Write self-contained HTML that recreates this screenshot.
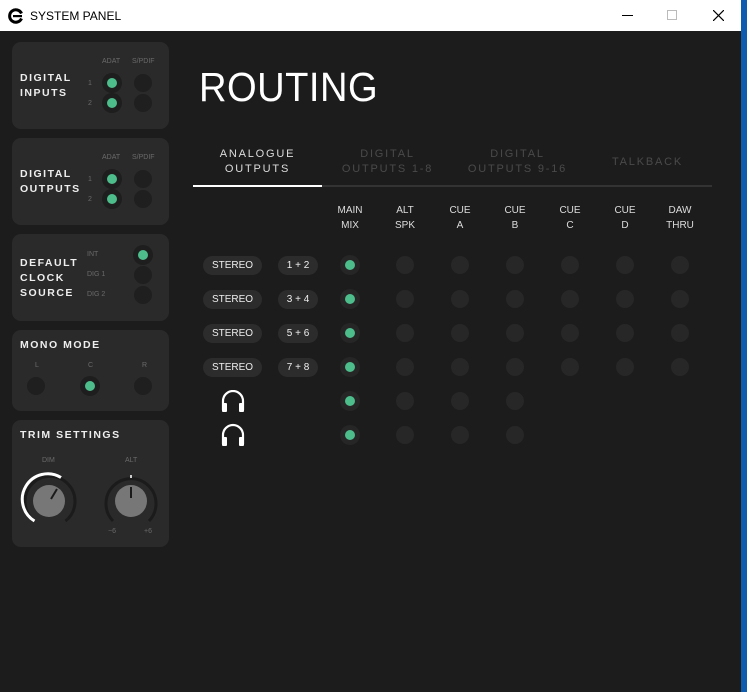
<!DOCTYPE html>
<html><head><meta charset="utf-8"><style>
*{margin:0;padding:0;box-sizing:border-box}
body{width:747px;height:692px;background:#0d5cb0;position:relative;overflow:hidden;font-family:"Liberation Sans",sans-serif}
#win{position:absolute;left:0;top:0;width:741px;height:692px;background:#1c1c1c}
#tb{position:absolute;left:0;top:0;width:741px;height:31px;background:#fff}
.a{position:absolute}
.p{position:absolute;left:12px;width:157px;background:#2a2a2a;border-radius:9px}
.h{position:absolute;color:#eee;font-size:10.5px;font-weight:bold;letter-spacing:1.5px;line-height:15px}
.s{position:absolute;color:#6a6a6a;font-size:7px}
.d{position:absolute;width:20px;height:20px;border-radius:50%;background:#1e1e1e}
.g::after{content:"";position:absolute;left:5px;top:5px;width:10px;height:10px;border-radius:50%;background:#4dbd8c}
.e{width:18px;height:18px;background:#1f1f1f}
.t{position:absolute;text-align:center;font-size:11px;letter-spacing:1.8px;line-height:15px}
.c{position:absolute;width:50px;text-align:center;color:#ddd;font-size:10px;line-height:15px}
.pill{position:absolute;height:19px;border-radius:10px;background:#2c2c2c;color:#eee;font-size:10px;line-height:19px;text-align:center}
</style></head><body>
<div id="win">
<div id="tb">
 <svg class="a" style="left:8px;top:8px" width="16" height="16" viewBox="0 0 16 16"><path d="M13.5 5.5 A6.2 6.2 0 1 0 13.5 10.5" fill="none" stroke="#000" stroke-width="3"/><rect x="5" y="7" width="9" height="2.2" fill="#000"/></svg>
 <div class="a" style="left:30px;top:9px;font-size:12px;color:#000">SYSTEM PANEL</div>
 <div class="a" style="left:622px;top:15px;width:11px;height:1px;background:#000"></div>
 <div class="a" style="left:667px;top:10px;width:10px;height:10px;border:1px solid #bbb"></div>
 <svg class="a" style="left:713px;top:10px" width="11" height="11"><path d="M0 0L11 11M11 0L0 11" stroke="#000" stroke-width="1.2"/></svg>
</div>

<div class="p" style="top:42px;height:87px"></div>
<div class="h" style="left:20px;top:71px">DIGITAL<br>INPUTS</div>
<div class="s" style="left:102px;top:58px">ADAT</div><div class="s" style="left:132px;top:58px">S/PDIF</div>
<div class="s" style="left:88px;top:80px">1</div><div class="s" style="left:88px;top:100px">2</div>
<div class="d g" style="left:102px;top:73px"></div><div class="d e" style="left:134px;top:74px"></div>
<div class="d g" style="left:102px;top:93px"></div><div class="d e" style="left:134px;top:94px"></div>

<div class="p" style="top:138px;height:87px"></div>
<div class="h" style="left:20px;top:167px">DIGITAL<br>OUTPUTS</div>
<div class="s" style="left:102px;top:154px">ADAT</div><div class="s" style="left:132px;top:154px">S/PDIF</div>
<div class="s" style="left:88px;top:176px">1</div><div class="s" style="left:88px;top:196px">2</div>
<div class="d g" style="left:102px;top:169px"></div><div class="d e" style="left:134px;top:170px"></div>
<div class="d g" style="left:102px;top:189px"></div><div class="d e" style="left:134px;top:190px"></div>

<div class="p" style="top:234px;height:87px"></div>
<div class="h" style="left:20px;top:256px">DEFAULT<br>CLOCK<br>SOURCE</div>
<div class="s" style="left:87px;top:251px">INT</div><div class="s" style="left:87px;top:271px">DIG 1</div><div class="s" style="left:87px;top:291px">DIG 2</div>
<div class="d g" style="left:133px;top:245px"></div><div class="d e" style="left:134px;top:266px"></div><div class="d e" style="left:134px;top:286px"></div>

<div class="p" style="top:330px;height:81px"></div>
<div class="h" style="left:20px;top:338px">MONO MODE</div>
<div class="s" style="left:35px;top:362px">L</div><div class="s" style="left:88px;top:362px">C</div><div class="s" style="left:142px;top:362px">R</div>
<div class="d e" style="left:27px;top:377px"></div><div class="d g" style="left:80px;top:376px"></div><div class="d e" style="left:134px;top:377px"></div>

<div class="p" style="top:420px;height:127px"></div>
<div class="h" style="left:20px;top:428px">TRIM SETTINGS</div>
<div class="s" style="left:42px;top:457px">DIM</div><div class="s" style="left:125px;top:457px">ALT</div>
<div class="s" style="left:108px;top:528px">−6</div><div class="s" style="left:144px;top:528px">+6</div>
<svg class="a" style="left:0;top:460px" width="180" height="80">
 <path d="M34.5 61 A25 25 0 1 1 65.5 61" fill="none" stroke="#1b1b1b" stroke-width="3"/>
 <path d="M34.5 61 A25 25 0 0 1 61 17.5" fill="none" stroke="#fff" stroke-width="3"/>
 <circle cx="49" cy="41" r="16" fill="#777"/>
 <path d="M51 39 L57 29" stroke="#1b1b1b" stroke-width="2"/>
 <path d="M113 61 A25 25 0 1 1 149 61" fill="none" stroke="#1b1b1b" stroke-width="3"/>
 <circle cx="131" cy="41" r="16" fill="#777"/>
 <path d="M131 38 V27" stroke="#1b1b1b" stroke-width="2"/>
 <path d="M131 15 V18" stroke="#ccc" stroke-width="2"/>
</svg>

<div class="a" style="left:199px;top:64px;color:#fff;font-size:41px;letter-spacing:0.5px;transform:scaleX(0.93);transform-origin:left">ROUTING</div>

<div class="t" style="left:193px;top:147px;width:129px;color:#ddd">ANALOGUE<br>OUTPUTS</div>
<div class="t" style="left:323px;top:147px;width:129px;color:#4a4a4a">DIGITAL<br>OUTPUTS 1-8</div>
<div class="t" style="left:453px;top:147px;width:129px;color:#4a4a4a">DIGITAL<br>OUTPUTS 9-16</div>
<div class="t" style="left:583px;top:155px;width:129px;color:#4a4a4a">TALKBACK</div>
<div class="a" style="left:193px;top:185px;width:519px;height:2px;background:#333"></div>
<div class="a" style="left:193px;top:185px;width:129px;height:2px;background:#fff"></div>

<div class="c" style="left:325px;top:203px">MAIN<br>MIX</div>
<div class="c" style="left:380px;top:203px">ALT<br>SPK</div>
<div class="c" style="left:435px;top:203px">CUE<br>A</div>
<div class="c" style="left:490px;top:203px">CUE<br>B</div>
<div class="c" style="left:545px;top:203px">CUE<br>C</div>
<div class="c" style="left:600px;top:203px">CUE<br>D</div>
<div class="c" style="left:655px;top:203px">DAW<br>THRU</div>

<div class="pill" style="left:203px;top:256px;width:59px">STEREO</div><div class="pill" style="left:278px;top:256px;width:40px">1 + 2</div>
<div class="pill" style="left:203px;top:290px;width:59px">STEREO</div><div class="pill" style="left:278px;top:290px;width:40px">3 + 4</div>
<div class="pill" style="left:203px;top:324px;width:59px">STEREO</div><div class="pill" style="left:278px;top:324px;width:40px">5 + 6</div>
<div class="pill" style="left:203px;top:358px;width:59px">STEREO</div><div class="pill" style="left:278px;top:358px;width:40px">7 + 8</div>
<svg class="a" style="left:220px;top:390px" width="26" height="56" viewBox="0 0 26 56">
 <g fill="none" stroke="#fff" stroke-width="2.2"><path d="M3 20 V11 A10 10 0 0 1 23 11 V20"/><path d="M3 54 V45 A10 10 0 0 1 23 45 V54"/></g>
 <g fill="#fff"><rect x="2" y="13" width="5" height="9" rx="1"/><rect x="19" y="13" width="5" height="9" rx="1"/><rect x="2" y="47" width="5" height="9" rx="1"/><rect x="19" y="47" width="5" height="9" rx="1"/></g>
</svg>

<div id="grid"></div>
</div>
<script>
var cols=[350,405,460,515,570,625,680],rows=[265,299,333,367,401,435],h='';
rows.forEach(function(y,r){cols.forEach(function(x,c){
 if(r>=4&&c>=4)return;
 if(c==0)h+='<div class="d g" style="left:'+(x-10)+'px;top:'+(y-10)+'px;background:#262626"></div>';
 else h+='<div class="d" style="left:'+(x-9)+'px;top:'+(y-9)+'px;width:18px;height:18px;background:#272727"></div>';
});});
document.getElementById('grid').outerHTML=h;
</script>
</body></html>
